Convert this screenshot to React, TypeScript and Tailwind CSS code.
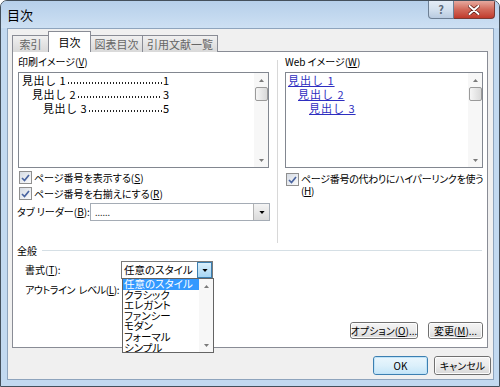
import React from "react";

const F = "font-['Noto_Sans_CJK_JP','Noto_Sans',sans-serif] [font-feature-settings:'palt']";

function U({ children }: { children: React.ReactNode }) {
  return <span className="underline underline-offset-[1px]">{children}</span>;
}

function Tri({ up = false, color = "#000", w = 7, h = 4 }: { up?: boolean; color?: string; w?: number; h?: number }) {
  return (
    <svg width={w} height={h} viewBox="0 0 7 4">
      <path d={up ? "M0 4 L3.5 0 L7 4 Z" : "M0 0 L7 0 L3.5 4 Z"} fill={color} />
    </svg>
  );
}

function Check() {
  return (
    <span className="flex h-[13px] w-[13px] shrink-0 items-center justify-center border border-[#8f8f8f] bg-gradient-to-br from-[#d5dbe4] to-[#fbfbfb]">
      <svg width="9" height="8" viewBox="0 0 9 8">
        <path d="M1 4 L3.5 6.5 L8 1" stroke="#4a64a0" strokeWidth="1.7" fill="none" />
      </svg>
    </span>
  );
}

function VScroll({ thumb = true }: { thumb?: boolean }) {
  return (
    <div className="flex w-[14px] shrink-0 flex-col items-center bg-[#f7f7f7]">
      <div className="flex h-[14px] w-full items-center justify-center">
        <Tri up color="#7a7a7a" w={5} h={3} />
      </div>
      {thumb && (
        <div className="h-[14px] w-[13px] rounded-[2px] border border-[#9a9a9a] bg-gradient-to-r from-[#f6f6f6] to-[#d9d9d9]" />
      )}
      <div className="flex-1" />
      <div className="flex h-[14px] w-full items-center justify-center">
        <Tri color="#7a7a7a" w={5} h={3} />
      </div>
    </div>
  );
}

function Leader({ cls, label, num }: { cls: string; label: string; num: string }) {
  return (
    <div className={"flex h-[14px] w-[150px] items-center text-[11px] leading-[14px] text-black " + cls}>
      <span className="shrink-0 whitespace-pre tracking-[0.5px] [font-feature-settings:normal]">{label}</span>
      <span className="mx-[1px] mt-[6px] h-[2px] min-w-0 flex-1 bg-[radial-gradient(circle,#222_0.7px,transparent_1px)] bg-[length:3px_2px] bg-repeat-x" />
      <span className="shrink-0">{num}</span>
    </div>
  );
}

function WebLink({ cls, label }: { cls: string; label: string }) {
  return (
    <div className={"h-[14px] text-[11px] leading-[14px] " + cls}>
      <span className="whitespace-pre tracking-[1px] text-[#2e2ec0] underline [font-feature-settings:normal]">{label}</span>
    </div>
  );
}

function Btn({ children, w, focus = false }: { children: React.ReactNode; w: string; focus?: boolean }) {
  return (
    <div
      className={
        "flex shrink-0 items-center justify-center whitespace-nowrap rounded-[3px] border text-[10px] leading-none text-black " +
        w +
        (focus
          ? " border-[#3c7fb1] bg-gradient-to-b from-[#eaf6fd] via-[#dcf0fb] to-[#c4e5f8]"
          : " border-[#707070] bg-gradient-to-b from-[#f4f4f4] via-[#ebebeb] to-[#d8d8d8]")
      }
    >
      <div
        className={
          "flex h-full w-full items-center justify-center rounded-[2px] border " +
          (focus ? "border-[#bfe3f8]" : "border-[#fcfcfc]")
        }
      >
        {children}
      </div>
    </div>
  );
}

function Tab({ label, w, active = false }: { label: string; w: string; active?: boolean }) {
  return (
    <div
      className={
        "relative -ml-px flex items-center justify-center whitespace-nowrap border border-b-0 border-[#898c95] text-[11px] leading-none " +
        w +
        (active
          ? " z-20 h-[21px] bg-white text-black"
          : " z-0 h-[17px] bg-gradient-to-b from-[#f0f0f0] to-[#d9d9d9] text-[#666]")
      }
    >
      {label}
    </div>
  );
}

const ITEMS = ["任意のスタイル", "クラシック", "エレガント", "ファンシー", "モダン", "フォーマル", "シンプル"];

export default function App() {
  return (
    <div className={"relative flex h-[387px] w-[500px] flex-col overflow-hidden rounded-t-[7px] border border-[#44505c] bg-[#c2d9f0] " + F}>
      {/* title bar */}
      <div className="flex h-[27px] shrink-0 items-start bg-gradient-to-b from-[#b6cfea] to-[#cde0f3]">
        <div className="pl-[6px] pt-[7px] text-[13px] leading-[14px] text-black">目次</div>
        <div className="flex-1" />
        <div className="mr-[4px] flex h-[18px]">
          <div className="flex w-[26px] items-center justify-center rounded-bl-[4px] border border-t-0 border-[#6d7f94] bg-gradient-to-b from-[#e3ecf6] via-[#d3e0ee] to-[#b9cbe0] text-[11px] font-bold text-[#5b6877]">
            ?
          </div>
          <div className="flex w-[41px] items-center justify-center rounded-br-[4px] border border-l-0 border-t-0 border-[#7a3a33] bg-gradient-to-b from-[#e6a99f] via-[#d2695a] to-[#c0392b]">
            <svg width="12" height="10" viewBox="0 0 12 10">
              <path d="M1.5 1 L10.5 9 M10.5 1 L1.5 9" stroke="#5a1a14" strokeWidth="3.4" strokeLinecap="round" />
              <path d="M1.5 1 L10.5 9 M10.5 1 L1.5 9" stroke="#ffffff" strokeWidth="2" strokeLinecap="round" />
            </svg>
          </div>
        </div>
      </div>

      {/* client */}
      <div className="ml-[6px] mr-[5px] flex h-[352px] shrink-0 flex-col border border-[#8ea4bd] bg-[#f0f0f0]">
        {/* tabs */}
        <div className="relative z-10 ml-[5px] flex h-[23px] items-end">
          <Tab label="索引" w="w-[37px]" />
          <Tab label="目次" w="w-[43px]" active />
          <Tab label="図表目次" w="w-[53px]" />
          <Tab label="引用文献一覧" w="w-[76px]" />
        </div>

        {/* panel */}
        <div className="-mt-px ml-[4px] flex h-[297px] w-[476px] flex-col border border-[#898c95] bg-white">
          <div className="flex">
            {/* left column */}
            <div className="flex w-[264px] shrink-0 flex-col">
              <div className="mt-[4px] pl-[5px] text-[10px] leading-[12px] text-black">
                印刷イメージ(<U>V</U>)
              </div>
              <div className="ml-[5px] mt-[4px] flex h-[96px] w-[251px] border border-[#828790] bg-white">
                <div className="flex flex-1 flex-col">
                  <Leader cls="pl-[3px]" label="見出し 1" num="1" />
                  <Leader cls="pl-[13px]" label="見出し 2" num="3" />
                  <Leader cls="pl-[24px]" label="見出し 3" num="5" />
                </div>
                <VScroll />
              </div>
              <div className="ml-[6px] mt-[3px] flex h-[13px] items-center gap-[2px] whitespace-nowrap text-[10px] leading-[12px]">
                <Check />
                <span>
                  ページ番号を表示する(<U>S</U>)
                </span>
              </div>
              <div className="ml-[6px] mt-[3px] flex h-[13px] items-center gap-[2px] whitespace-nowrap text-[10px] leading-[12px]">
                <Check />
                <span>
                  ページ番号を右揃えにする(<U>R</U>)
                </span>
              </div>
              <div className="mt-[3px] flex h-[18px] items-center whitespace-nowrap text-[10px] leading-[12px]">
                <div className="w-[77px] pl-[4px]">
                  タブ&nbsp;リーダー(<U>B</U>):
                </div>
                <div className="flex h-full w-[180px] items-center border border-[#a5acb5] bg-white">
                  <div className="flex-1 pl-[4px] text-[9px] leading-none text-[#333]">......</div>
                  <div className="flex h-full w-[16px] items-center justify-center border-l border-[#b2b2b2] bg-gradient-to-b from-[#f4f4f4] to-[#dadada]">
                    <Tri w={6} h={3} />
                  </div>
                </div>
              </div>
            </div>

            {/* divider */}
            <div className="mt-[8px] h-[183px] w-px shrink-0 bg-[#d8d8d8]" />

            {/* right column */}
            <div className="flex flex-1 flex-col">
              <div className="mt-[4px] pl-[7px] text-[10px] leading-[12px] text-black">
                Web イメージ(<U>W</U>)
              </div>
              <div className="ml-[7px] mt-[4px] flex h-[96px] w-[198px] border border-[#828790] bg-white">
                <div className="flex flex-1 flex-col">
                  <WebLink cls="pl-[2px]" label="見出し 1" />
                  <WebLink cls="pl-[12px]" label="見出し 2" />
                  <WebLink cls="pl-[23px]" label="見出し 3" />
                </div>
                <VScroll />
              </div>
              <div className="ml-[8px] mt-[5px] flex items-start gap-[2px] text-[10px] leading-[12px] tracking-[-0.3px]">
                <Check />
                <span className="whitespace-nowrap">
                  ページ番号の代わりにハイパーリンクを使う
                  <br />
                  (<U>H</U>)
                </span>
              </div>
            </div>
          </div>

          {/* 全般 group */}
          <div className="mt-[1px] flex h-[13px] items-center pl-[4px] pr-[5px] text-[10px] leading-[12px]">
            <span>全般</span>
            <div className="ml-[5px] h-px flex-1 bg-[#d5dfe5]" />
          </div>
          <div className="mt-[4px] flex h-[18px] items-center pl-[12px] text-[10px] leading-[12px]">
            <div className="w-[96px]">
              書式(<U>T</U>):
            </div>
            <div className="relative flex h-full w-[92px] items-center border border-[#7a7a7a] bg-white">
              <div className="flex-1 whitespace-nowrap pl-[2px] text-[10.5px]">任意のスタイル</div>
              <div className="flex h-full w-[15px] items-center justify-center border border-[#3c7fb1] bg-gradient-to-b from-[#d9effc] to-[#a7d6f4]">
                <Tri w={6} h={3} />
              </div>
              {/* open list */}
              <div className="absolute left-0 top-[16px] z-30 flex h-[75px] w-[92px] overflow-hidden border border-[#646464] bg-white">
                <div className="flex flex-1 flex-col overflow-hidden">
                  {ITEMS.map((t, i) => (
                    <div
                      key={t}
                      className={
                        "h-[10.6px] shrink-0 whitespace-nowrap pl-[1px] text-[10.5px] leading-[10.6px] " +
                        (i === 0 ? "bg-[#3399ff] text-white" : "text-black")
                      }
                    >
                      {t}
                    </div>
                  ))}
                </div>
                <VScroll thumb={false} />
              </div>
            </div>
          </div>
          <div className="mt-[5px] flex h-[12px] items-center whitespace-nowrap pl-[12px] text-[10px] leading-[12px] tracking-[-0.4px]">
            アウトライン&nbsp;&nbsp;レベル(<U>L</U>):
          </div>
          <div className="mt-[26px] flex justify-end gap-[10px] pr-[4px]">
            <Btn w="w-[68px] h-[17px]">
              オプション(<U>O</U>)...
            </Btn>
            <Btn w="w-[55px] h-[17px]">
              変更(<U>M</U>)...
            </Btn>
          </div>
        </div>

        {/* bottom buttons */}
        <div className="mt-[8px] flex justify-end gap-[6px] pr-[2px]">
          <Btn w="w-[55px] h-[19px]" focus>
            OK
          </Btn>
          <Btn w="w-[57px] h-[19px]">キャンセル</Btn>
        </div>
      </div>
    </div>
  );
}
